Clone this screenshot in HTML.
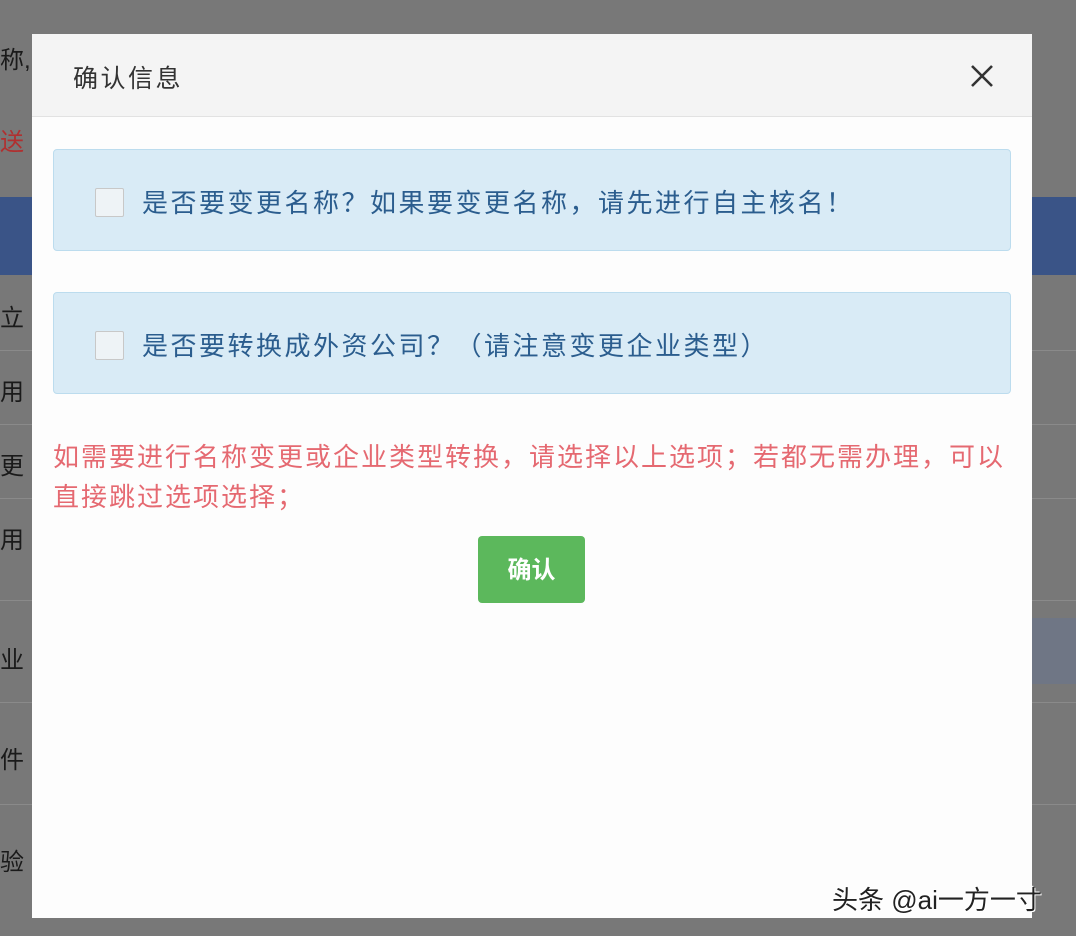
<!DOCTYPE html>
<html><head><meta charset="utf-8"><style>
body{margin:0;width:1076px;height:936px;background:#787878;position:relative;overflow:hidden;font-family:"Liberation Sans","Noto Sans CJK SC",sans-serif;}
.bg{position:absolute;left:0;color:#1a1a1a;font-size:24px;}
.line{position:absolute;height:1px;background:#8a8a8a;}
.modal{position:absolute;left:32px;top:34px;width:1000px;height:884px;background:#fdfdfd;}
.hd{height:82px;background:#f4f4f4;border-bottom:1px solid #e2e2e2;position:relative;}
.hd span{position:absolute;left:41px;top:25px;font-size:25px;letter-spacing:2.5px;color:#333;}
.x{position:absolute;right:38px;top:30px;}
.box{position:absolute;left:21px;width:956px;height:100px;background:#d9ebf6;border:1px solid #bcdcee;border-radius:4px;}
.cb{position:absolute;left:41px;top:38px;width:27px;height:27px;border:1px solid #c8c8c8;border-radius:2px;background:#eef3f6;}
.bt{position:absolute;left:88px;top:33px;font-size:26px;letter-spacing:2.5px;color:#2b5d8e;white-space:nowrap;}
.red{position:absolute;left:21px;top:403px;width:975px;font-size:26px;letter-spacing:2px;line-height:40px;color:#e0454f;opacity:.8;}
.btn{position:absolute;left:446px;top:502px;width:107px;height:67px;background:#5cb85c;border-radius:4px;color:#fff;font-size:24px;font-weight:bold;text-align:center;line-height:70px;}
.wm{position:absolute;left:832px;top:880px;font-size:26px;color:#222;text-shadow:1px 1px 0 #fff,-1px -1px 0 #fff;}
</style></head><body>
<div class="bg" style="top:40px">称,</div>
<div class="bg" style="top:122px;color:#b03030">送</div>
<div style="position:absolute;left:0;top:197px;width:1076px;height:78px;background:#3a5487"></div>
<div class="bg" style="top:298px">立</div>
<div class="line" style="left:0;top:350px;width:1076px"></div>
<div class="bg" style="top:372px">用</div>
<div class="line" style="left:0;top:424px;width:1076px"></div>
<div class="bg" style="top:446px">更</div>
<div class="line" style="left:0;top:498px;width:1076px"></div>
<div class="bg" style="top:520px">用</div>
<div class="line" style="left:0;top:600px;width:1076px"></div>
<div style="position:absolute;left:1032px;top:618px;width:44px;height:66px;background:#6f7685"></div>
<div class="bg" style="top:640px">业</div>
<div class="line" style="left:0;top:702px;width:1076px"></div>
<div class="bg" style="top:740px">件</div>
<div class="line" style="left:0;top:804px;width:1076px"></div>
<div class="bg" style="top:842px">验</div>
<div class="modal">
<div class="hd"><span>确认信息</span>
<svg class="x" width="24" height="24" viewBox="0 0 24 24"><path d="M2 2L22 22M22 2L2 22" stroke="#333" stroke-width="2.6"/></svg></div>
<div class="box" style="top:115px"><div class="cb"></div><div class="bt">是否要变更名称？如果要变更名称，请先进行自主核名！</div></div>
<div class="box" style="top:258px"><div class="cb"></div><div class="bt">是否要转换成外资公司？（请注意变更企业类型）</div></div>
<div class="red">如需要进行名称变更或企业类型转换，请选择以上选项；若都无需办理，可以<br>直接跳过选项选择；</div>
<div class="btn">确认</div>
</div>
<div class="wm">头条 @ai一方一寸</div>
</body></html>
